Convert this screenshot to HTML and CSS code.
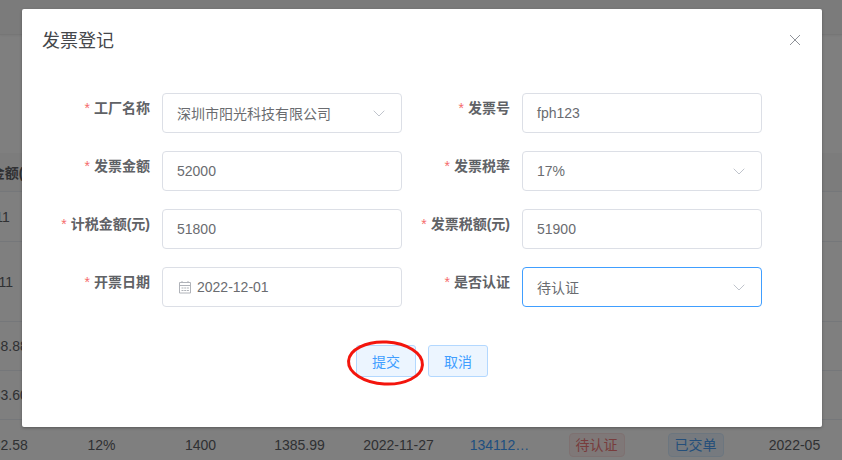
FILE: index.html
```html
<!DOCTYPE html>
<html lang="zh-CN">
<head>
<meta charset="utf-8">
<title>发票登记</title>
<link rel="stylesheet" href="styles.css">
</head>
<body>
<div class="page">
  <div class="topbar"></div>
  <div class="table">
    <div class="row head"><div class="cell">开票金额(元)</div></div>
    <div class="row r1"><div class="cell">11</div></div>
    <div class="row r2"><div class="cell">111</div></div>
    <div class="row r3"><div class="cell">1288.88</div></div>
    <div class="row r3"><div class="cell">1233.60</div></div>
    <div class="row r5">
      <div class="cell">1482.58</div>
      <div class="cell">12%</div>
      <div class="cell">1400</div>
      <div class="cell">1385.99</div>
      <div class="cell">2022-11-27</div>
      <div class="cell link">134112…</div>
      <div class="cell"><span class="tag tag-red">待认证</span></div>
      <div class="cell"><span class="tag tag-blue">已交单</span></div>
      <div class="cell">2022-05</div>
    </div>
  </div>
</div>
<div class="overlay"></div>
<div class="dialog">
  <header class="dialog-head">
    <h2 class="dialog-title">发票登记</h2>
    <svg class="close" width="12" height="12" viewBox="0 0 12 12"><path d="M1 1l10 10M11 1L1 11" fill="none" stroke="#909399" stroke-width="1"/></svg>
  </header>
  <form class="form">
    <div class="field"><label class="label req">工厂名称</label>
      <div class="control select"><span class="value cjk">深圳市阳光科技有限公司</span><svg class="chev" width="12" height="7" viewBox="0 0 12 7"><path d="M.7.7L6 6l5.3-5.3" fill="none" stroke="#c0c4cc"/></svg></div></div>
    <div class="field"><label class="label req">发票号</label>
      <div class="control"><span class="value">fph123</span></div></div>
    <div class="field"><label class="label req">发票金额</label>
      <div class="control"><span class="value">52000</span></div></div>
    <div class="field"><label class="label req">发票税率</label>
      <div class="control select"><span class="value">17%</span><svg class="chev" width="12" height="7" viewBox="0 0 12 7"><path d="M.7.7L6 6l5.3-5.3" fill="none" stroke="#c0c4cc"/></svg></div></div>
    <div class="field"><label class="label req">计税金额(元)</label>
      <div class="control"><span class="value">51800</span></div></div>
    <div class="field"><label class="label req">发票税额(元)</label>
      <div class="control"><span class="value">51900</span></div></div>
    <div class="field"><label class="label req">开票日期</label>
      <div class="control date">
        <svg class="cal" width="14" height="14" viewBox="0 0 14 14"><path d="M1.5 2.5h11v10.5h-11zM1.5 5.5h11M4 1v2M10 1v2" fill="none" stroke="#b0b3b9"/><path d="M3.5 7.5h2v1h-2zM6.2 7.5h2v1h-2zM8.9 7.5h2v1h-2zM3.5 10h2v1h-2zM6.2 10h2v1h-2zM8.9 10h2v1h-2z" fill="#b0b3b9"/></svg>
        <span class="value">2022-12-01</span></div></div>
    <div class="field"><label class="label req">是否认证</label>
      <div class="control select focus"><span class="value cjk">待认证</span><svg class="chev" width="12" height="7" viewBox="0 0 12 7"><path d="M.7.7L6 6l5.3-5.3" fill="none" stroke="#c0c4cc"/></svg></div></div>
  </form>
  <div class="actions">
    <button type="button" class="btn">提交</button>
    <button type="button" class="btn">取消</button>
    <svg class="ring" width="80" height="50" viewBox="0 0 80 50"><ellipse cx="39.5" cy="25" rx="37" ry="21" fill="none" stroke="#f3150d" stroke-width="3" transform="rotate(3 39 25)"/></svg>
  </div>
</div>
</body>
</html>
```
FILE: styles.css
```css
* { box-sizing: border-box; }
html, body { margin: 0; height: 100%; overflow: hidden; }
body {
  width: 842px;
  height: 460px;
  position: relative;
  background: #fff;
  font-family: "Liberation Sans", "Noto Sans CJK SC", sans-serif;
  font-size: 14px;
  color: #606266;
}
.page { width: 842px; height: 460px; overflow: hidden; }
.topbar {
  height: 35px;
  background: #f7f7f7;
  border-bottom: 1px solid #ececec;
  box-shadow: 0 1px 2px rgba(0,0,0,.05);
}
.table { margin-top: 118px; margin-left: -47px; width: 938px; }
.row {
  display: grid;
  grid-template-columns: repeat(9, 99px);
  align-items: center;
  border-bottom: 1px solid #ebeef5;
}
.cell { text-align: center; white-space: nowrap; }
.head { height: 39px; background: #f8f8f9; font-weight: 700; }
.r1 { height: 50px; }
.r2 { height: 80px; }
.r3 { height: 49px; }
.r5 { height: 50px; border-bottom: 0; }
.link { color: #409eff; padding-left: 4px; }
.tag {
  display: inline-block;
  width: 56px;
  height: 24px;
  line-height: 22px;
  border: 1px solid;
  border-radius: 4px;
  font-size: 14px;
  text-align: center;
}
.tag-red { background: #fef0f0; border-color: #fde2e2; color: #f07a7a; }
.tag-blue { background: #ecf5ff; border-color: #d9ecff; color: #4a9ff5; }

.overlay { position: absolute; inset: 0; background: rgba(0,0,0,.5); }
.dialog {
  position: absolute;
  left: 22px;
  top: 9px;
  width: 800px;
  height: 418px;
  background: #fff;
  border-radius: 2px;
  box-shadow: 0 1px 3px rgba(0,0,0,.3);
}
.dialog-head {
  display: flex;
  justify-content: space-between;
  align-items: center;
  height: 62px;
  padding: 0 21px 0 20px;
}
.dialog-title {
  margin: 0;
  padding-top: 1px;
  font-size: 18px;
  font-weight: 400;
  line-height: 24px;
  color: #45474b;
}
.form {
  display: grid;
  grid-template-columns: 360px 350px;
  grid-auto-rows: 40px;
  row-gap: 18px;
  margin-top: 22px;
  padding-left: 30px;
}
.field { display: flex; }
.label {
  flex: none;
  width: 110px;
  padding-right: 12px;
  text-align: right;
  font-weight: 700;
  line-height: 30px;
  white-space: nowrap;
  color: #606266;
}
.req::before { content: "*"; color: #f56c6c; margin-right: 4px; font-weight: 400; }
.control {
  flex: none;
  width: 240px;
  height: 40px;
  display: flex;
  align-items: center;
  padding: 0 14px;
  border: 1px solid #dcdfe6;
  border-radius: 4px;
  background: #fff;
  color: #6a6c70;
}
.select { justify-content: space-between; padding-right: 16px; }
.focus { border-color: #409eff; }
.value { line-height: 38px; }
.cjk { position: relative; top: 1px; }
.date { padding-left: 15px; gap: 5px; }
.cal { flex: none; }
.chev { flex: none; }
.actions {
  position: relative;
  display: flex;
  justify-content: center;
  gap: 12px;
  margin-top: 38px;
}
.btn {
  width: 60px;
  height: 32px;
  padding: 0;
  border: 1px solid #b3d8ff;
  border-radius: 3px;
  background: #ecf5ff;
  color: #409eff;
  font: inherit;
}
.ring { position: absolute; left: 324px; top: -7px; pointer-events: none; }
```
